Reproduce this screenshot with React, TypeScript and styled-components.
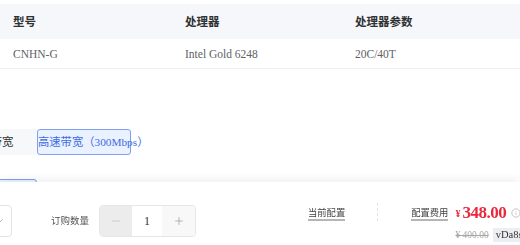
import React from 'react';
import styled, { createGlobalStyle } from 'styled-components';
import { Info, Minus, Plus } from 'lucide-react';

const Global = createGlobalStyle`
  html, body { margin: 0; padding: 0; background: #fff; }
  body {
    font-family: "Liberation Serif", "Noto Sans CJK SC", serif;
    width: 520px;
    height: 245px;
    overflow: hidden;
  }
`;

const Page = styled.div`
  width: 520px;
  padding-top: 4px;
`;

const Table = styled.div`
  display: flex;
  flex-direction: column;
`;

const TRow = styled.div<{ $head?: boolean }>`
  display: grid;
  grid-template-columns: 172px 170px 1fr;
  padding-left: 13px;
  height: ${(p) => (p.$head ? 34 : 29)}px;
  align-items: center;
  background: ${(p) => (p.$head ? '#f5f7fa' : '#fff')};
  border-bottom: 1px solid ${(p) => (p.$head ? '#f5f7fa' : '#ebeef5')};
  font-size: 11.5px;
  color: ${(p) => (p.$head ? '#303133' : '#606266')};
  font-weight: ${(p) => (p.$head ? 700 : 400)};
`;

const Options = styled.div`
  margin-top: 60px;
  display: flex;
  flex-direction: column;
  gap: 24px;
`;

const OptionRow = styled.div`
  display: flex;
  height: 26px;
`;

const OptionLabel = styled.div`
  width: 70px;
  margin-left: -33px;
  background: #f7f8fa;
  font-size: 11.5px;
  color: #333;
  line-height: 26px;
  text-align: center;
`;

const OptionButton = styled.div<{ $w: number; $shift?: number }>`
  box-sizing: border-box;
  width: ${(p) => p.$w}px;
  margin-left: ${(p) => p.$shift ?? 0}px;
  height: 26px;
  border: 1px solid #7f9ff0;
  border-radius: 3px;
  background: #eaf1ff;
  color: #3e6ce0;
  font-size: 11.3px;
  line-height: 24px;
  white-space: nowrap;
  padding: 0;
`;

const Bar = styled.div`
  position: fixed;
  left: 0;
  right: 0;
  bottom: 0;
  height: 63px;
  box-sizing: border-box;
  padding-top: 21px;
  background: #fff;
  box-shadow: 0 -3px 9px rgba(0, 0, 0, 0.06);
  display: flex;
  align-items: flex-start;
  overflow: hidden;
  white-space: nowrap;
`;

const Select = styled.div`
  box-sizing: border-box;
  flex: none;
  width: 80px;
  margin-left: -68px;
  margin-top: 2px;
  height: 32px;
  border: 1px solid #e0e3e8;
  border-radius: 4px;
  display: flex;
  align-items: center;
  justify-content: flex-end;
  padding-right: 8px;
  color: #b0b3b8;
`;

const QtyLabel = styled.div`
  flex: none;
  margin-left: 39px;
  margin-top: 2px;
  line-height: 32px;
  font-size: 9.5px;
  color: #555;
`;

const Stepper = styled.div`
  flex: none;
  margin-left: 10px;
  margin-top: 2px;
  display: flex;
  height: 32px;
  box-sizing: border-box;
  border: 1px solid #e6e6e6;
  border-radius: 4px;
  overflow: hidden;
`;

const StepCell = styled.div<{ $bg: string; $color: string; $w: number }>`
  width: ${(p) => p.$w}px;
  background: ${(p) => p.$bg};
  color: ${(p) => p.$color};
  display: flex;
  align-items: center;
  justify-content: center;
  font-size: 12px;
  font-family: "Liberation Serif", serif;
`;

const Tip = styled.span<{ $ml: number }>`
  flex: none;
  margin-left: ${(p) => p.$ml}px;
  margin-top: 5px;
  font-size: 9.3px;
  line-height: 11px;
  color: #444;
  border-bottom: 2px solid #b5b5b5;
`;

const Divider = styled.div`
  flex: none;
  margin-left: 32px;
  height: 18px;
  border-left: 1px dashed #e2e2e2;
`;

const PriceCol = styled.div`
  flex: none;
  margin-left: 7px;
  display: flex;
  flex-direction: column;
`;

const PriceLine = styled.div`
  display: flex;
  align-items: center;
  height: 20px;
  color: #e8283c;
  font-weight: 700;
`;

const Yen = styled.span`
  font-size: 10px;
  margin-right: 2px;
`;

const Amount = styled.span`
  font-size: 17px;
  letter-spacing: -0.5px;
`;

const InfoMark = styled.span`
  display: inline-flex;
  margin-left: 5px;
  color: #a0a0a0;
`;

const SubLine = styled.div`
  margin-top: 5px;
  display: flex;
  align-items: center;
  gap: 4px;
`;

const OldPrice = styled.span`
  font-size: 9.5px;
  color: #a6a6a6;
  text-decoration: line-through;
`;

const Code = styled.span`
  background: #eceef2;
  color: #333;
  font-size: 10.5px;
  line-height: 14px;
  padding: 0 3px;
`;

const Chevron = () => (
  <svg width="6" height="4" viewBox="0 0 6 4" fill="none">
    <path d="M0.5 0.5 L3 3 L5.5 0.5" stroke="currentColor" strokeWidth="1" />
  </svg>
);

export default function App() {
  return (
    <>
      <Global />
      <Page>
        <Table>
          <TRow $head>
            <span>型号</span>
            <span>处理器</span>
            <span>处理器参数</span>
          </TRow>
          <TRow>
            <span>CNHN-G</span>
            <span>Intel Gold 6248</span>
            <span>20C/40T</span>
          </TRow>
        </Table>
        <Options>
          <OptionRow>
            <OptionLabel>带宽</OptionLabel>
            <OptionButton $w={94}>高速带宽（300Mbps）</OptionButton>
          </OptionRow>
          <OptionRow>
            <OptionButton $w={80} $shift={-43} />
          </OptionRow>
        </Options>
      </Page>
      <Bar>
        <Select>
          <Chevron />
        </Select>
        <QtyLabel>订购数量</QtyLabel>
        <Stepper>
          <StepCell $w={32} $bg="#ececec" $color="#b5b5b5">
            <Minus size={12} strokeWidth={1.2} />
          </StepCell>
          <StepCell $w={30} $bg="#fff" $color="#333">1</StepCell>
          <StepCell $w={33} $bg="#f8f8f8" $color="#8a8a8a">
            <Plus size={12} strokeWidth={1.2} />
          </StepCell>
        </Stepper>
        <Tip $ml={112}>当前配置</Tip>
        <Divider />
        <Tip $ml={33}>配置费用</Tip>
        <PriceCol>
          <PriceLine>
            <Yen>¥</Yen>
            <Amount>348.00</Amount>
            <InfoMark>
              <Info size={10} strokeWidth={1.5} />
            </InfoMark>
          </PriceLine>
          <SubLine>
            <OldPrice>¥ 400.00</OldPrice>
            <Code>vDa8st9kQm</Code>
          </SubLine>
        </PriceCol>
      </Bar>
    </>
  );
}
